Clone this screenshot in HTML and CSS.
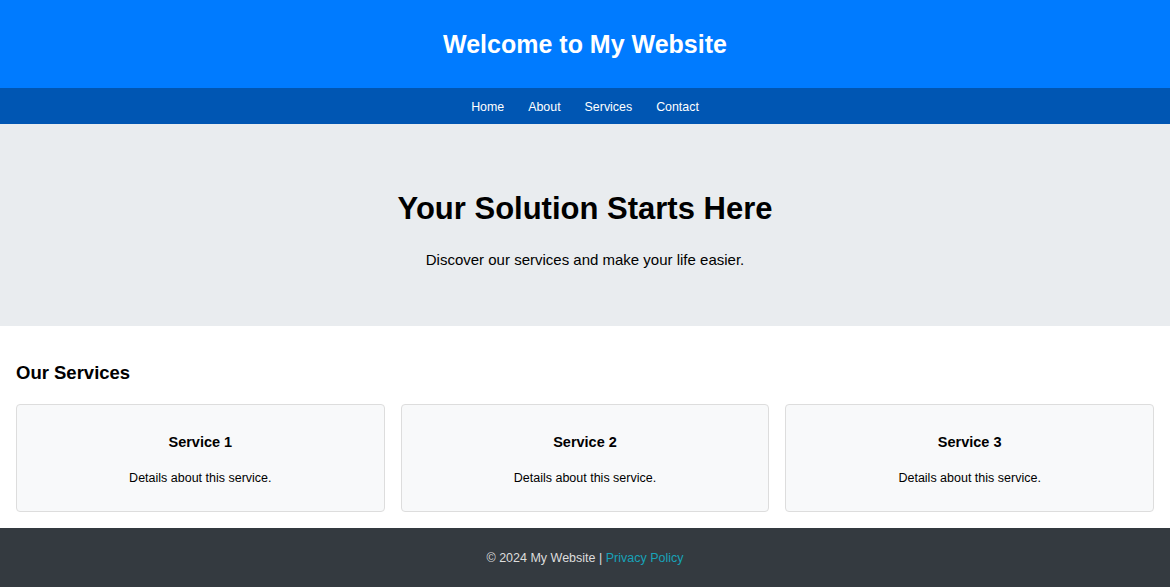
FILE: index.html
```html
<!DOCTYPE html>
<html lang="en">
  <head>
    <meta charset="UTF-8" />
    <meta name="viewport" content="width=device-width, initial-scale=1.0" />
    <title>My Website</title>
    <link rel="stylesheet" href="styles.css">
  </head>
  <body>
    <header class="site-header">
      <h1>Welcome to My Website</h1>
    </header>

    <nav class="site-nav">
      <a href="#">Home</a>
      <a href="#">About</a>
      <a href="#">Services</a>
      <a href="#">Contact</a>
    </nav>

    <section class="hero">
      <h2>Your Solution Starts Here</h2>
      <p>Discover our services and make your life easier.</p>
    </section>

    <section class="services">
      <h2>Our Services</h2>
      <div class="service-list">
        <div class="service">
          <h3>Service 1</h3>
          <p>Details about this service.</p>
        </div>
        <div class="service">
          <h3>Service 2</h3>
          <p>Details about this service.</p>
        </div>
        <div class="service">
          <h3>Service 3</h3>
          <p>Details about this service.</p>
        </div>
      </div>
    </section>

    <footer class="site-footer">
      <p>&copy; 2024 My Website | <a href="#">Privacy Policy</a></p>
    </footer>
  </body>
</html>
```

FILE: styles.css
```css
body {
  font-family: "Liberation Sans", Arial, sans-serif;
  margin: 0;
  color: #000;
}

.site-header {
  background: #007bff;
  color: white;
  text-align: center;
  height: 88px;
  display: flex;
  align-items: center;
  justify-content: center;
}

.site-header h1 {
  margin: 0;
  font-size: 25px;
}

.site-nav {
  background: #0056b3;
  height: 36px;
  display: flex;
  align-items: center;
  justify-content: center;
  gap: 24px;
}

.site-nav a {
  color: white;
  text-decoration: none;
  font-size: 12.4px;
  padding-top: 1px;
}

.hero {
  background: #e9ecef;
  text-align: center;
  height: 202px;
  display: flex;
  flex-direction: column;
  align-items: center;
  justify-content: center;
}

.hero h2 {
  margin: 8px 0 24px;
  font-size: 31px;
}

.hero p {
  margin: 0;
  font-size: 15px;
}

.services {
  padding: 16px 16px;
}

.services h2 {
  font-size: 18.5px;
  margin: 20px 0 20px;
}

.service-list {
  display: grid;
  grid-template-columns: repeat(3, 1fr);
  gap: 16px;
}

.service {
  background: #f8f9fa;
  border: 1px solid #ddd;
  border-radius: 4px;
  text-align: center;
  height: 106px;
  display: flex;
  flex-direction: column;
  align-items: center;
  justify-content: center;
}

.service h3 {
  margin: 3px 0 21px;
  font-size: 14.5px;
}

.service p {
  margin: 0;
  font-size: 12.5px;
}

.site-footer {
  background: #343a40;
  color: #ddd;
  text-align: center;
  height: 60px;
  display: flex;
  align-items: center;
  justify-content: center;
}

.site-footer p {
  margin: 0;
  font-size: 12.5px;
}

.site-footer a {
  color: #17a2b8;
  text-decoration: none;
}
```
